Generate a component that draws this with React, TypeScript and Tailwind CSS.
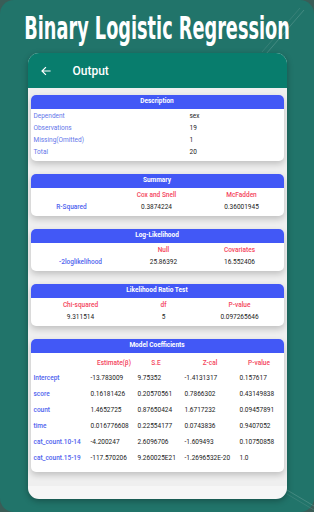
import React from 'react';

/**
 * Binary Logistic Regression output screen (store screenshot)
 */

const font = { fontFamily: 'Roboto, "Noto Sans", sans-serif' };

const CardHeader: React.FC<{ title: string }> = ({ title }) => (
  <div className="h-[14px] bg-[#4258f6] rounded-t-[5px] flex items-center justify-center text-white text-[6.5px] font-bold">
    {title}
  </div>
);

const Card: React.FC<{ title: string; children: React.ReactNode }> = ({ title, children }) => (
  <div className="bg-white rounded-[5px] shadow-[0_3px_6px_rgba(0,0,0,0.2)]">
    <CardHeader title={title} />
    {children}
  </div>
);

const description = [
  ['Dependent', 'sex'],
  ['Observations', '19'],
  ['Missing(Omitted)', '1'],
  ['Total', '20'],
];

const coefficients = [
  ['Intercept', '-13.783009', '9.75352', '-1.4131317', '0.157617'],
  ['score', '0.16181426', '0.20570561', '0.7866302', '0.43149838'],
  ['count', '1.4652725', '0.87650424', '1.6717232', '0.09457891'],
  ['time', '0.016776608', '0.22554177', '0.0743836', '0.9407052'],
  ['cat_count.10-14', '-4.200247', '2.6096706', '-1.609493', '0.10750858'],
  ['cat_count.15-19', '-117.570206', '9.260025E21', '-1.2696532E-20', '1.0'],
];

const BackArrow: React.FC = () => (
  <svg width="12" height="12" viewBox="0 0 24 24" fill="none" stroke="white" strokeWidth={2.4}>
    <path d="M20 12H5M11 5l-7 7 7 7" strokeLinecap="square" />
  </svg>
);

const Cell: React.FC<{ tone: 'head' | 'label' | 'value'; children?: React.ReactNode }> = ({ tone, children }) => {
  const color =
    tone === 'head' ? 'text-[#f4455d] font-medium' : tone === 'label' ? 'text-[#4f62ee] font-medium' : 'text-[#222]';
  return <div className={`h-[12px] flex items-center justify-center ${color}`}>{children}</div>;
};

export default function App() {
  return (
    <div className="w-[314px] h-[512px] bg-[#3a5d57] overflow-hidden" style={font}>
      <div className="relative w-full h-full rounded-[14px] bg-[#21746a] flex flex-col items-center">
        {/* decorative lines */}
        <svg className="absolute inset-0 pointer-events-none" width="314" height="512">
          <line x1="304" y1="10" x2="266" y2="54" stroke="#5a9890" strokeWidth="0.6" />
          <line x1="300" y1="8" x2="262" y2="52" stroke="#4f8d85" strokeWidth="0.5" />
          <line x1="287" y1="490" x2="314" y2="506" stroke="#5a9890" strokeWidth="0.6" />
          <line x1="287" y1="494" x2="314" y2="510" stroke="#4f8d85" strokeWidth="0.5" />
        </svg>

        <div className="h-[53px] w-full flex items-center justify-center overflow-visible">
          <span
            className="inline-block text-white font-bold text-[31px] leading-none whitespace-nowrap scale-x-[0.635] scale-y-[1.05] pt-[1px]"
            style={{ fontFamily: '"DejaVu Sans Condensed", "DejaVu Sans", sans-serif' }}
          >
            Binary Logistic Regression
          </span>
        </div>

        <div className="relative w-[259px] h-[446px] rounded-[11px] bg-[#f6f6f6] overflow-hidden shadow-[0_2px_6px_rgba(0,0,0,0.3)]">
          <div className="h-[35px] bg-[#087d6d] flex items-center pl-[12px] gap-[21px]">
            <BackArrow />
            <span className="text-white text-[12px] font-medium">Output</span>
          </div>

          <div className="flex flex-col gap-[13px] px-[3px] pt-[7px] pb-[14px] bg-[#efefef]">
            <Card title="Description">
              <div className="py-[2px]">
                {description.map(([k, v]) => (
                  <div key={k} className="grid grid-cols-[159px_1fr] h-[12px] items-center text-[6.5px]">
                    <span className="pl-[3px] text-[#6476ea]">{k}</span>
                    <span className="text-[#222]">{v}</span>
                  </div>
                ))}
              </div>
            </Card>

            <Card title="Summary">
              <div className="grid grid-cols-[82px_88px_82px] py-[2px] text-[6.5px] text-center">
                <Cell tone="head" />
                <Cell tone="head">Cox and Snell</Cell>
                <Cell tone="head">McFadden</Cell>
                <Cell tone="label">R-Squared</Cell>
                <Cell tone="value">0.3874224</Cell>
                <Cell tone="value">0.36001945</Cell>
              </div>
            </Card>

            <Card title="Log-Likelihood">
              <div className="grid grid-cols-[100px_66px_86px] py-[2px] text-[6.5px] text-center">
                <Cell tone="head" />
                <Cell tone="head">Null</Cell>
                <Cell tone="head">Covariates</Cell>
                <Cell tone="label">-2loglikelihood</Cell>
                <Cell tone="value">25.86392</Cell>
                <Cell tone="value">16.552406</Cell>
              </div>
            </Card>

            <Card title="Likelihood Ratio Test">
              <div className="grid grid-cols-[100px_66px_86px] py-[2px] text-[6.5px] text-center">
                <Cell tone="head">Chi-squared</Cell>
                <Cell tone="head">df</Cell>
                <Cell tone="head">P-value</Cell>
                <Cell tone="value">9.311514</Cell>
                <Cell tone="value">5</Cell>
                <Cell tone="value">0.097265646</Cell>
              </div>
            </Card>

            <Card title="Model Coefficients">
              <div className="pt-[4px] pb-[5px] text-[6.5px]">
                <div className="grid grid-cols-[60px_47px_47px_55px_43px] h-[14px] items-center text-center text-[#f4455d] font-medium">
                  <span />
                  <span>Estimate(β)</span>
                  <span className="pr-[10px]">S.E</span>
                  <span className="pr-[4px]">Z-cal</span>
                  <span className="pr-[4px]">P-value</span>
                </div>
                {coefficients.map((row) => (
                  <div
                    key={row[0]}
                    className="grid grid-cols-[60px_47px_47px_55px_43px] h-[16px] items-center text-[#222] whitespace-nowrap"
                  >
                    <span className="pl-[3px] text-[#4f62ee] font-medium">{row[0]}</span>
                    <span>{row[1]}</span>
                    <span>{row[2]}</span>
                    <span>{row[3]}</span>
                    <span>{row[4]}</span>
                  </div>
                ))}
              </div>
            </Card>
          </div>
        </div>
      </div>
    </div>
  );
}
